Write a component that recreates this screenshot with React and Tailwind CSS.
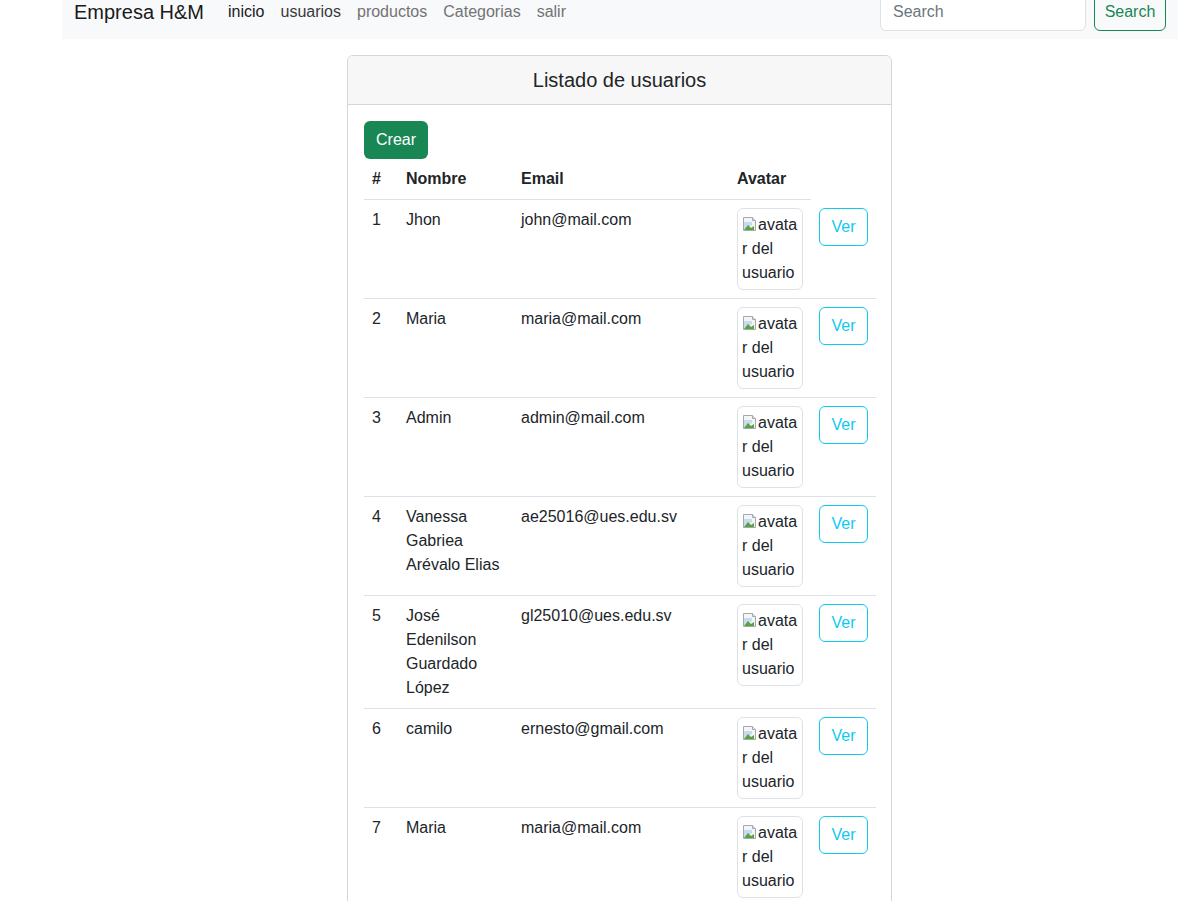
const usuarios = [
  { id: 1, nombre: 'Jhon', email: 'john@mail.com' },
  { id: 2, nombre: 'Maria', email: 'maria@mail.com' },
  { id: 3, nombre: 'Admin', email: 'admin@mail.com' },
  { id: 4, nombre: 'Vanessa Gabriea Arévalo Elias', email: 'ae25016@ues.edu.sv' },
  { id: 5, nombre: 'José Edenilson Guardado López', email: 'gl25010@ues.edu.sv' },
  { id: 6, nombre: 'camilo', email: 'ernesto@gmail.com' },
  { id: 7, nombre: 'Maria', email: 'maria@mail.com' },
];

const BrokenImage = () => (
  <svg width="16" height="16" viewBox="0 0 16 16" className="inline-block align-[-2px]">
    <path d="M1.5 1.5h9l3 3v10h-12z" fill="#f3f5f7" stroke="#a3a9b0" />
    <path d="M10.5 1.5v3h3" fill="#dfe3e7" stroke="#a3a9b0" />
    <path d="M2 14V6h8v3z" fill="#c9dcef" />
    <path d="M2 14l4-5 3 3 3-2v4z" fill="#5aa33f" />
  </svg>
);

const Avatar = () => (
  <div className="inline-block w-[66px] rounded-md border border-[#dee2e6] bg-white p-1 leading-6 text-[#212529]">
    <BrokenImage />avata
    <br />r del
    <br />usuario
  </div>
);

const Navbar = () => (
  <nav className="ml-[62px] w-[1116px] bg-[#f8f9fa] px-3 py-2 flex items-center">
    <span className="text-[20px] text-[#1a1a1a] mr-4 leading-[30px]">Empresa H&amp;M</span>
    <ul className="flex items-center">
      <li className="px-2 text-[#1a1a1a]">inicio</li>
      <li className="px-2 text-[#3a3a3a]">usuarios</li>
      <li className="px-2 text-[#737373]">productos</li>
      <li className="px-2 text-[#737373]">Categorias</li>
      <li className="px-2 text-[#737373]">salir</li>
    </ul>
    <form className="ml-auto flex items-center gap-2">
      <input
        type="search"
        placeholder="Search"
        className="h-[38px] w-[206px] rounded-md border border-[#dee2e6] bg-white px-3 text-base placeholder:text-[#6c757d] outline-none"
      />
      <button type="button" className="h-[38px] w-[72px] rounded-md border border-[#198754] text-[#198754]">
        Search
      </button>
    </form>
  </nav>
);

export default function App() {
  return (
    <div
      className="-mt-[15px] min-h-screen bg-white text-base leading-6 text-[#212529]"
      style={{ fontFamily: '"Liberation Sans", Arial, sans-serif' }}
    >
      <Navbar />
      <div className="ml-[62px] w-[1115px] pt-4">
        <div className="mx-auto w-[545px] rounded-md border border-[#d6d6d6] overflow-hidden">
          <div className="bg-[#f7f7f7] border-b border-[#d6d6d6] py-3 text-center text-[20px] leading-6 font-medium">
            Listado de usuarios
          </div>
          <div className="p-4">
            <button type="button" className="h-[38px] rounded-md bg-[#198754] px-3 text-white">
              Crear
            </button>
            <table className="w-full table-fixed border-collapse">
              <colgroup>
                <col className="w-[34px]" />
                <col className="w-[115px]" />
                <col className="w-[216px]" />
                <col className="w-[82px]" />
                <col className="w-[65px]" />
              </colgroup>
              <thead>
                <tr className="text-left font-bold">
                  <th className="p-2 border-b border-[#dee2e6]">#</th>
                  <th className="p-2 border-b border-[#dee2e6]">Nombre</th>
                  <th className="p-2 border-b border-[#dee2e6]">Email</th>
                  <th className="p-2 border-b border-[#dee2e6]">Avatar</th>
                </tr>
              </thead>
              <tbody>
                {usuarios.map((u) => (
                  <tr key={u.id} className="border-b border-[#dee2e6] align-top">
                    <td className="p-2">{u.id}</td>
                    <td className="p-2">{u.nombre}</td>
                    <td className="p-2">{u.email}</td>
                    <td className="p-2">
                      <Avatar />
                    </td>
                    <td className="p-2">
                      <button type="button" className="h-[38px] w-[49px] rounded-md border border-[#0dcaf0] text-[#0dcaf0]">
                        Ver
                      </button>
                    </td>
                  </tr>
                ))}
              </tbody>
            </table>
          </div>
        </div>
      </div>
    </div>
  );
}
